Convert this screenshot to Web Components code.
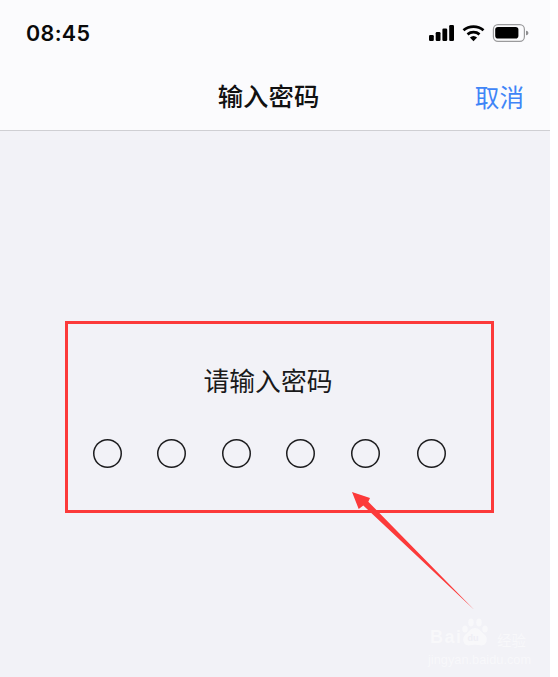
<!DOCTYPE html>
<html lang="zh"><head><meta charset="utf-8"><title>输入密码</title>
<style>html,body{margin:0;padding:0;background:#fff}body{width:558px;height:677px;overflow:hidden}</style>
</head><body>
<pin-screen>
  <status-bar slot="status" time="08:45"></status-bar>
  <nav-bar slot="nav" action="取消">输入密码</nav-bar>
  <pin-prompt label="请输入密码" count="6"></pin-prompt>
  <call-arrow></call-arrow>
  <jy-mark></jy-mark>
</pin-screen>
<script>
const FONT='"Noto Sans CJK SC","Liberation Sans",sans-serif';
class Base extends HTMLElement{
  render(html){(this.shadowRoot||this.attachShadow({mode:'open'})).innerHTML=html}
}
customElements.define('pin-screen',class extends Base{connectedCallback(){this.render(`<style>
:host{display:flex;flex-direction:column;position:relative;width:550px;height:677px;background:#f2f2f7;overflow:hidden;font-family:${FONT};color:#111}
header{background:#fbfbfd;border-bottom:1px solid #cfcfd3;height:130px;box-sizing:content-box}
main{flex:1;display:flex;flex-direction:column;padding-top:190px}
</style><header><slot name="status"></slot><slot name="nav"></slot></header><main><slot></slot></main>`)}});
customElements.define('status-bar',class extends Base{connectedCallback(){this.render(`<style>
:host{display:flex;justify-content:space-between;align-items:center;height:66px;padding:0 21px 0 26px;box-sizing:border-box}
.t{font:600 21.5px/1 Inter,"Liberation Sans",sans-serif;letter-spacing:.35px;color:#0a0a0a;padding-top:2px}
svg{display:block}
</style><span class="t">${this.getAttribute('time')}</span>
<svg width="100" height="20" viewBox="429 23 100 20" aria-hidden="true">
<g fill="#000"><rect x="429" y="35" width="4.8" height="6" rx="1.2"/><rect x="435.7" y="32" width="4.8" height="9" rx="1.2"/><rect x="442.4" y="28.5" width="4.8" height="12.500" rx="1.2"/><rect x="449.200" y="25" width="4.800" height="16" rx="1.2"/></g>
<g fill="none" stroke="#000" stroke-width="2.8"><path d="M463.500 30.200a15.500 15.500 0 0 1 20 0"/><path d="M467.500 34.300a9.600 9.600 0 0 1 12 0"/></g><path d="M473.500 41.300 469.900 37.500a5.400 5.400 0 0 1 7.200 0z" fill="#000"/>
<rect x="493.400" y="24.600" width="31" height="16.800" rx="4.600" fill="none" stroke="#9a9a9c" stroke-width="1.200"/>
<rect x="495.200" y="27" width="23.200" height="11.500" rx="2.800" fill="#000"/>
<path d="M526 30.700c1.600.3 2.400 1.200 2.400 2.300s-.8 2-2.400 2.300z" fill="#8e8e90"/></svg>`)}});
customElements.define('nav-bar',class extends Base{connectedCallback(){this.render(`<style>
:host{display:grid;grid-template-columns:1fr auto 1fr;align-items:center;height:64px;padding:0 26px 4px;box-sizing:border-box}
.m{grid-column:2;margin-right:13px;font-size:25.4px;line-height:1;font-weight:500;color:#111}
.a{grid-column:3;justify-self:end;font-size:24.6px;line-height:1;color:#3f85f7}
</style><span class="m"><slot></slot></span><span class="a">${this.getAttribute('action')}</span>`)}});
customElements.define('pin-prompt',class extends Base{connectedCallback(){
const n=+this.getAttribute('count');this.render(`<style>
:host{display:flex;flex-direction:column;align-items:center;width:429px;height:192px;margin-left:65px;box-sizing:border-box;border:3px solid #fc3a3a;padding-top:42px}
.l{font-size:25.8px;line-height:28px;color:#1a1a1a;margin-left:-23px}
.d{display:flex;gap:35.5px;margin-top:45px;margin-left:-21px}
.d i{display:block;width:29px;height:29px;box-sizing:border-box;box-shadow:inset 0 0 0 1.5px #1c1c1e;border-radius:50%}
.d i:last-child{margin-left:1.5px}
</style><div class="l">${this.getAttribute('label')}</div><div class="d">${'<i></i>'.repeat(n)}</div>`)}});
customElements.define('call-arrow',class extends Base{connectedCallback(){this.render(`<style>
:host{position:absolute;left:340px;top:480px;width:150px;height:140px}svg{display:block}
</style><svg width="150" height="140" viewBox="340 480 150 140" aria-hidden="true"><path d="M352 492 370 498 368.300 501.700 474.400 610 363.300 505.500 358.700 509Z" fill="#fc3a3a"/></svg>`)}});
customElements.define('jy-mark',class extends Base{connectedCallback(){this.render(`<style>
:host{position:absolute;left:428px;top:618px;width:102px;height:48px;display:flex;flex-direction:column;color:#fafafc;opacity:.75;font-family:"Liberation Sans",sans-serif}
.r{display:flex;align-items:flex-end;height:30px}
.b{font:700 18px/18px "Liberation Sans",sans-serif;letter-spacing:1.5px;width:32px;padding-left:2px;margin-bottom:2px;box-sizing:border-box}
.j{font:14.5px/16px ${FONT};white-space:nowrap;margin-left:7px}
.u{font:12.8px/14px "Liberation Sans",sans-serif;white-space:nowrap;margin-top:5px}
svg{display:block}
text{font:700 9px "Liberation Sans",sans-serif;fill:#eeeef4}
</style><div class="r"><span class="b">Bai</span>
<svg width="30" height="30" viewBox="0 0 30 30" aria-hidden="true"><g fill="#fafafc"><ellipse cx="5" cy="11" rx="2.800" ry="3.500"/><ellipse cx="11" cy="4.500" rx="2.800" ry="4"/><ellipse cx="19" cy="4.500" rx="2.800" ry="4"/><ellipse cx="25" cy="11" rx="2.800" ry="3.500"/><path d="M15 10c5 0 6 4 10 7 4 4 1 11-4 10.500-2-.2-4-.8-6-.8s-4 .6-6 .8c-5 .5-8-6.500-4-10.500 4-3 5-7 10-7z"/></g><text x="7.500" y="23">du</text></svg>
<span class="j">经验</span></div><span class="u">jingyan.baidu.com</span>`)}});
</script>
</body></html>
